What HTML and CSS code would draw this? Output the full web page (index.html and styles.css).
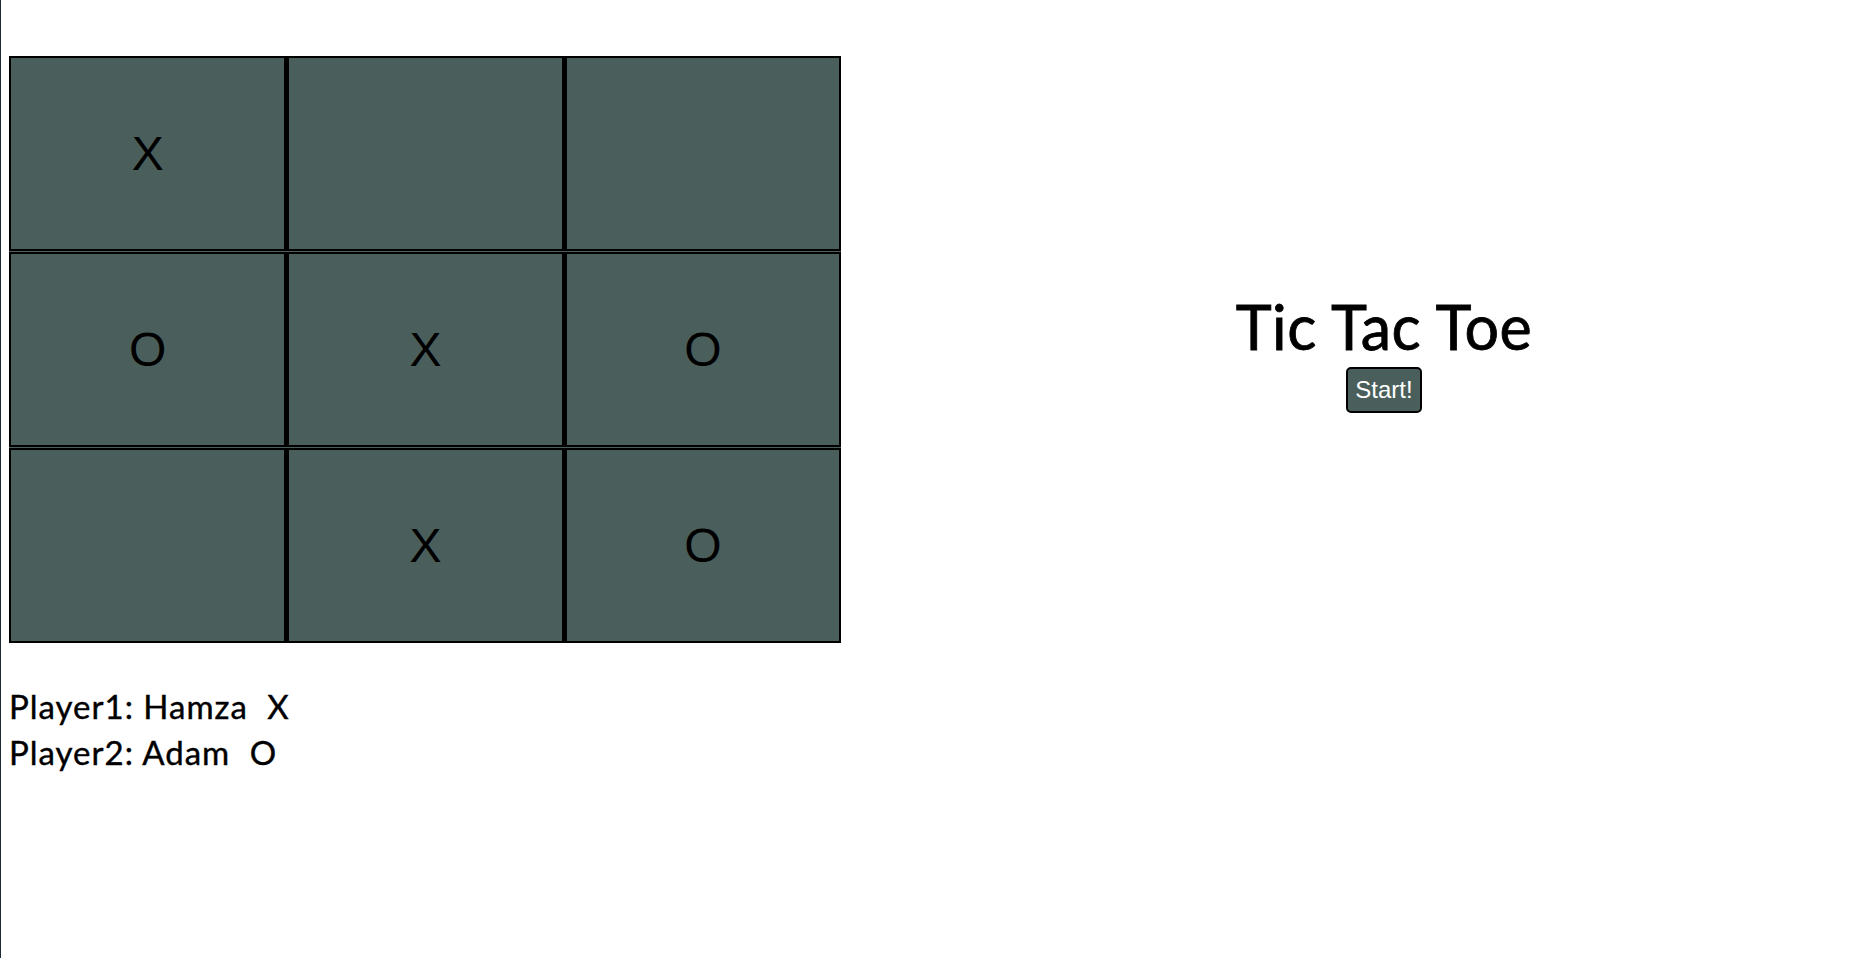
FILE: index.html
```html
<!DOCTYPE html>
<html lang="en">
<head>
    <meta charset="UTF-8">
    <meta name="viewport" content="width=device-width, initial-scale=1.0">
    <title>Tic Tac Toe</title>
    <link rel="stylesheet" href="styles.css">
</head>
<body>
    <div class="game">
        <div class="board">
            <div class="cell">X</div>
            <div class="cell"></div>
            <div class="cell"></div>
            <div class="cell">O</div>
            <div class="cell">X</div>
            <div class="cell">O</div>
            <div class="cell"></div>
            <div class="cell">X</div>
            <div class="cell">O</div>
        </div>
        <div class="side">
            <h1 class="title">Tic Tac Toe</h1>
            <button class="start">Start!</button>
        </div>
    </div>

    <div class="players">
        <p>Player1: Hamza <span class="mark">X</span></p>
        <p>Player2: Adam <span class="mark">O</span></p>
    </div>
</body>
</html>
```

FILE: styles.css
```css
html {
    border-left: 1px solid #1c2a33;
    min-height: 100%;
}
body {
    margin: 8px;
    font-family: Lato, "Open Sans", sans-serif;
    color: #000;
    background: #fff;
}
.game {
    display: flex;
    align-items: center;
    padding-top: 48px;
}
.board {
    width: 832px;
    display: grid;
    grid-template-columns: repeat(3, 1fr);
    grid-auto-rows: 195px;
    row-gap: 1px;
    background-color: #4a5f5c;
}
.cell {
    box-sizing: border-box;
    border: 2px solid #000;
    border-left-width: 3px;
    background-color: #4a5f5c;
    display: flex;
    justify-content: center;
    align-items: center;
    font-family: "Liberation Sans", Arial, sans-serif;
    font-size: 48px;
    color: #000;
}
.cell:nth-child(3n+1) {
    border-left-width: 2px;
}
.side {
    flex: 1;
    display: flex;
    flex-direction: column;
    align-items: center;
    padding-left: 85px;
}
.title {
    margin: 0;
    font-size: 61px;
    font-weight: 400;
    line-height: 80px;
    letter-spacing: 0.5px;
    -webkit-text-stroke: 0.8px #000;
}
.start {
    font-family: "Liberation Sans", Arial, sans-serif;
    font-size: 24px;
    color: #fff;
    background-color: #4a5f5c;
    border: 2px solid #000;
    border-radius: 5px;
    padding: 7px 7px;
    cursor: pointer;
}
.players {
    margin-top: 40px;
    font-size: 33px;
    letter-spacing: 1px;
    -webkit-text-stroke: 0.4px #000;
}
.players p {
    margin: 0;
    line-height: 46px;
}
.mark {
    margin-left: 10px;
}
```
